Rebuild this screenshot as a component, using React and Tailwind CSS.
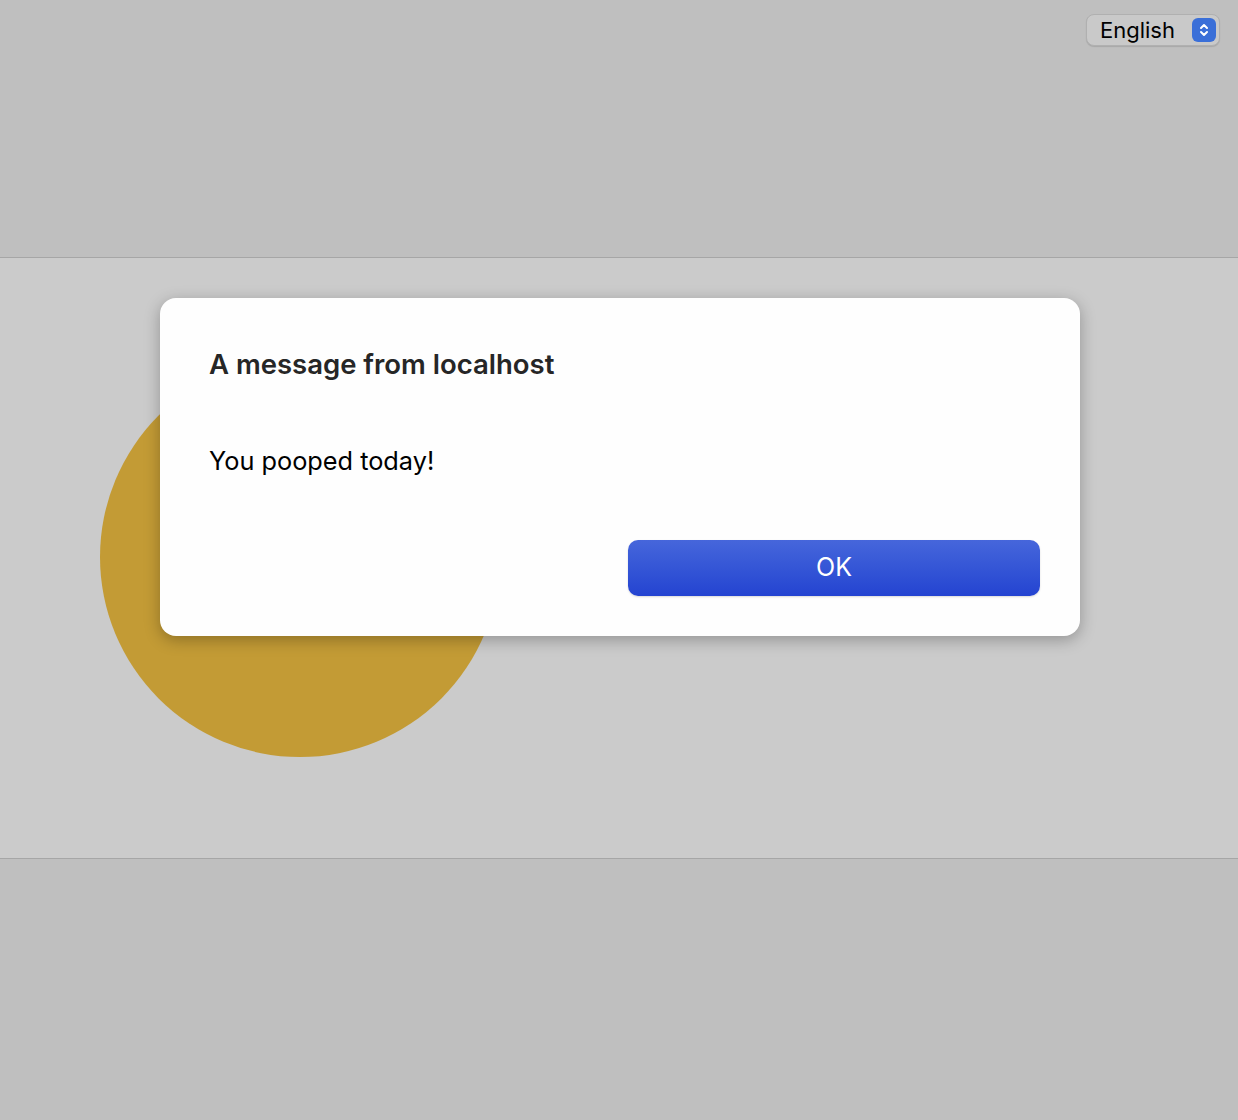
import React from "react";

const App = () => {
  return (
    <div className="relative w-full h-[1120px] bg-[#bfbfbf] overflow-hidden font-['Inter','Liberation_Sans',sans-serif]">
      <div className="h-[257px] flex justify-end items-start pt-[14px] pr-[18px]">
        <div className="flex items-center h-[32px] w-[134px] rounded-[8px] bg-[#c9c9c9] border border-[#b0b0b0] shadow-[0_1px_1px_rgba(0,0,0,0.12)] pl-[13px] pr-[3px]">
          <span className="text-[22px] text-black leading-none flex-1">English</span>
          <div className="w-[24px] h-[24px] rounded-[6px] bg-[#3a6fd8] flex items-center justify-center">
            <svg width="12" height="16" viewBox="0 0 12 16" fill="none" stroke="white" strokeWidth="2" strokeLinecap="round" strokeLinejoin="round">
              <path d="M3 6 L6 3 L9 6" />
              <path d="M3 10 L6 13 L9 10" />
            </svg>
          </div>
        </div>
      </div>
      <div className="h-[602px] bg-[#cbcbcb] border-y border-[#a6a6a6] pt-[99px] pl-[100px]">
        <div className="w-[400px] h-[400px] rounded-full bg-[#c39b35]" />
      </div>

      <div className="absolute left-[160px] top-[298px] w-[920px] h-[338px] bg-[#fefefe] rounded-[16px] shadow-[0_4px_16px_rgba(0,0,0,0.28)] flex flex-col px-[49px] pt-[48px]">
        <h1 className="text-[27.5px] font-semibold text-[#262626] leading-[36px]">A message from localhost</h1>
        <p className="mt-[62px] text-[25.3px] text-black leading-[34px]">You pooped today!</p>
        <div className="flex justify-end mt-[62px]">
          <button className="w-[412px] h-[56px] -mr-[9px] rounded-[10px] bg-gradient-to-b from-[#4666db] to-[#2443d1] text-white text-[25px] shadow-[0_1px_2px_rgba(0,0,0,0.15)]">
            OK
          </button>
        </div>
      </div>
    </div>
  );
};

export default App;
